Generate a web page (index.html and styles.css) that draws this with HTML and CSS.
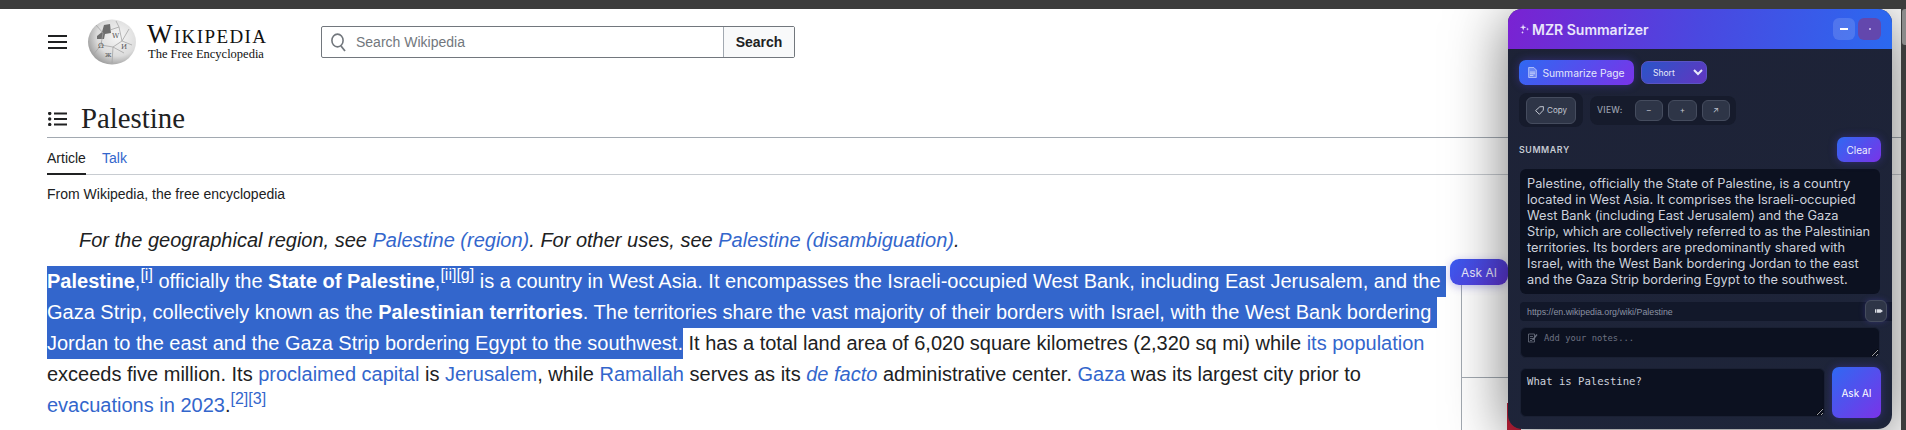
FILE: index.html
```html
<!DOCTYPE html>
<html lang="en">
<head>
<meta charset="utf-8">
<title>Palestine - Wikipedia</title>
<link rel="stylesheet" href="styles.css">
</head>
<body>
<div class="chrome-bar"></div>
<div class="viewport">
  <header class="wiki-header">
    <svg class="hamburger" viewBox="0 0 19 14"><path d="M0 1h19M0 7h19M0 13h19" stroke="#202122" stroke-width="2"/></svg>
    <svg class="globe" viewBox="0 0 48 46">
      <defs>
        <radialGradient id="gl" cx="0.62" cy="0.38" r="0.72">
          <stop offset="0" stop-color="#f6f6f6"/>
          <stop offset="0.6" stop-color="#dcdcdc"/>
          <stop offset="1" stop-color="#8f8f8f"/>
        </radialGradient>
      </defs>
      <ellipse cx="24" cy="23" rx="24" ry="22.5" fill="url(#gl)"/>
      <path d="M9 17l5-4 2-7 6-1 1 9-6 1-1 5H9z" fill="#6e6e6e"/>
      <path d="M8 6l7 8M15 14l-2 12M13 26l12 2M25 28l9-6M34 22L31 8M31 8l-9 3M34 22l10 4M25 28l-1 16M13 26L5 36M36 34l-11-6M28 2l3 6M41 10l-7 12" stroke="#a4a4a4" stroke-width="0.8" fill="none"/>
      <text class="globe-glyph" x="10" y="29">Ω</text>
      <text class="globe-glyph" x="24" y="19">W</text>
      <text class="globe-glyph" x="33" y="30">И</text>
      <text class="globe-glyph" x="17" y="38">ж</text>
    </svg>
    <div class="wordmark">
      <div class="wordmark-name">Wikipedia</div>
      <div class="wordmark-sub">The Free Encyclopedia</div>
    </div>
    <form class="search">
      <div class="search-field">
        <svg class="search-icon" viewBox="0 0 15 19"><ellipse cx="6.5" cy="7.5" rx="5.6" ry="6.4" fill="none" stroke="#72777d" stroke-width="1.6"/><path d="M10 13l4 5" stroke="#72777d" stroke-width="1.8"/></svg>
        <span class="search-placeholder">Search Wikipedia</span>
      </div>
      <div class="search-btn">Search</div>
    </form>
  </header>

  <main class="main">
    <h1 class="page-title">
      <svg class="toc-icon" viewBox="0 0 19 14"><path d="M6 1.5h13M6 7h13M6 12.5h13" stroke="#202122" stroke-width="2"/><circle cx="1.7" cy="1.5" r="1.7" fill="#202122"/><circle cx="1.7" cy="7" r="1.7" fill="#202122"/><circle cx="1.7" cy="12.5" r="1.7" fill="#202122"/></svg>
      <span>Palestine</span>
    </h1>
    <nav class="tabs">
      <span class="tab tab-active">Article</span>
      <a class="tab" href="#">Talk</a>
    </nav>
    <div class="tagline">From Wikipedia, the free encyclopedia</div>
    <div class="hatnote">For the geographical region, see <a href="#">Palestine (region)</a>. For other uses, see <a href="#">Palestine (disambiguation)</a>.</div>
    <div class="article-row">
      <p class="lead"><span id="selected"><b>Palestine</b>,<sup><a class="ref-first" href="#">[i]</a></sup> officially the <b>State of Palestine</b>,<sup><a href="#">[ii]</a><a href="#">[g]</a></sup> is a country in West Asia. It encompasses the Israeli-occupied West Bank, including East Jerusalem, and the Gaza Strip, collectively known as the <b>Palestinian territories</b>. The territories share the vast majority of their borders with Israel, with the West Bank bordering Jordan to the east and the Gaza Strip bordering Egypt to the southwest.</span> It has a total land area of 6,020 square kilometres (2,320 sq mi) while <a href="#">its population</a> exceeds five million. Its <a href="#">proclaimed capital</a> is <a href="#">Jerusalem</a>, while <a href="#">Ramallah</a> serves as its <a href="#"><i>de facto</i></a> administrative center. <a href="#">Gaza</a> was its largest city prior to <a href="#">evacuations in 2023</a>.<sup><a href="#">[2]</a><a href="#">[3]</a></sup></p>
      <aside class="infobox">
        <div class="infobox-cell"></div>
        <div class="infobox-flag"></div>
      </aside>
    </div>
  </main>

  <button class="ask-float">Ask AI</button>

  <section class="panel">
    <div class="panel-head">
      <div class="panel-title">
        <svg class="spark" viewBox="0 0 10 10"><path d="M3.5 0l.8 2.4L7 3.2l-2.4.9-.9 2.5-.9-2.5L.4 3.2l2.5-.8zM8 3.6l.4 1.1 1.2.4-1.2.4L8 6.7l-.4-1.2-1.1-.4 1.1-.4zM3 7l.4 1 1 .4-1 .4-.4 1.1-.4-1.1-1-.4 1-.4z" fill="#e6e0fb"/></svg>
        <span>MZR Summarizer</span>
      </div>
      <div class="panel-win">
        <button class="win-btn win-min"><i></i></button>
        <button class="win-btn win-close"><i></i></button>
      </div>
    </div>

    <div class="panel-row row-summarize">
      <button class="btn-grad btn-summarize">
        <svg class="doc" viewBox="0 0 10 13"><path d="M.5.5h6l3 3v9h-9z" fill="#c9d4fb" fill-opacity=".35" stroke="#dfe5fd" stroke-width=".8"/><path d="M2 6h6M2 8h6M2 10h4" stroke="#eef1fe" stroke-width=".8"/></svg>
        <span>Summarize Page</span>
      </button>
      <select class="length"><option>Short</option></select>
    </div>

    <div class="panel-row row-tools">
      <div class="tool-copy">
        <button class="btn-dark btn-copy">
          <svg class="tag" viewBox="0 0 9 9"><path d="M.6 4.6L4.8.8 8.4.6l-.1 3.6-3.9 4.1z" fill="none" stroke="#d3d7e0" stroke-width=".9"/></svg>
          <span>Copy</span>
        </button>
      </div>
      <div class="tool-view">
        <span class="view-label">VIEW:</span>
        <button class="btn-dark btn-view">–</button>
        <button class="btn-dark btn-view">+</button>
        <button class="btn-dark btn-view">↗</button>
      </div>
    </div>

    <div class="panel-row row-summary-head">
      <span class="summary-label">SUMMARY</span>
      <button class="btn-grad btn-clear">Clear</button>
    </div>

    <div class="summary-box">Palestine, officially the State of Palestine, is a country located in West Asia. It comprises the Israeli-occupied West Bank (including East Jerusalem) and the Gaza Strip, which are collectively referred to as the Palestinian territories. Its borders are predominantly shared with Israel, with the West Bank bordering Jordan to the east and the Gaza Strip bordering Egypt to the southwest.</div>

    <div class="url-row">
      <span class="url-text">https://en.wikipedia.org/wiki/Palestine</span>
      <button class="btn-dark btn-edit">
        <svg class="pencil" viewBox="0 0 8 6"><path d="M0 1.2h1v3.6H0zM1.6 1.2h4L8 3 5.6 4.8h-4z" fill="#d9dce3"/></svg>
      </button>
    </div>

    <div class="notes-wrap">
      <textarea class="notes" placeholder="Add your notes..."></textarea>
      <svg class="note-icon" viewBox="0 0 10 10"><path d="M.5 1h6v8h-6zM2 3.5h3M2 5.5h3M2 7.5h2" fill="none" stroke="#6c7282" stroke-width=".8"/><path d="M4.5 6l4-5 1 1-4 5-1.3.3z" fill="#6c7282"/></svg>
    </div>

    <div class="ask-row">
      <textarea class="question">What is Palestine?</textarea>
      <button class="btn-grad btn-ask">Ask AI</button>
    </div>
  </section>

  <div class="scroll-track"><div class="scroll-thumb"></div></div>
</div>
<script src="script.js"></script>
</body>
</html>
```
FILE: styles.css
```css
* { box-sizing: border-box; }
html, body { margin: 0; padding: 0; height: 430px; overflow: hidden; background: #fff; }
body { font-family: "Liberation Sans", Arial, sans-serif; color: #202122; }
button { font-family: inherit; cursor: pointer; }

.chrome-bar { height: 9px; background: #3c3c3c; }
.viewport { position: relative; height: 421px; overflow: hidden; background: #fff; }

/* Wikipedia header */
.wiki-header { display: flex; align-items: center; height: 66px; padding-left: 48px; }
.hamburger { width: 19px; height: 14px; flex: none; }
.globe { width: 48px; height: 46px; margin-left: 21px; flex: none; }
.globe-glyph { font-family: "DejaVu Serif", serif; font-size: 7px; fill: #555; }
.wordmark { margin-left: 11px; width: 120px; flex: none; font-family: "Liberation Serif", serif; color: #111; white-space: nowrap; }
.wordmark-name { font-size: 27px; line-height: 22px; font-variant: small-caps; letter-spacing: 1.4px; }
.wordmark-sub { font-size: 12.5px; line-height: 15px; margin-top: 2px; margin-left: 1px; }

.search { display: flex; flex: none; width: 474px; height: 32px; margin-left: 54px; border: 1px solid #72777d; border-radius: 2px; }
.search-field { flex: 1; display: flex; align-items: center; padding-left: 9px; gap: 10px; }
.search-icon { width: 15px; height: 19px; }
.search-placeholder { font-size: 14px; color: #72777d; }
.search-btn { width: 71px; display: flex; align-items: center; justify-content: center; border-left: 1px solid #a2a9b1; background: #f8f9fa; font-size: 14px; font-weight: 700; }

/* Article */
.main { padding-left: 47px; }
.page-title { display: flex; align-items: center; height: 63px; margin: 0; padding: 27px 0 2px; border-bottom: 1px solid #a2a9b1; font-family: "Liberation Serif", serif; font-weight: 400; font-size: 28.8px; }
.toc-icon { width: 19px; height: 14px; margin: 0 14px 0 1px; }
.tabs { display: flex; gap: 16px; height: 37px; border-bottom: 1px solid #c8ccd1; font-size: 14px; line-height: 41px; }
.tab { display: block; height: 37px; }
.tab-active { border-bottom: 2px solid #202122; width: 39px; }
a { color: #3366cc; text-decoration: none; }
.tagline { font-size: 14px; line-height: 20px; margin-top: 9px; }
.hatnote { font-size: 20px; font-style: italic; line-height: 31px; margin: 21px 0 0 32px; }
.article-row { display: flex; margin-top: 10px; }
.lead { flex: none; width: 1402px; margin: 0 13px 0 0; font-size: 20px; line-height: 31px; }
.lead sup { font-size: 16px; line-height: 1; vertical-align: super; }
.lead ::selection, .lead::selection { background: #3366cc; color: #fff; }
.ref-first { border-bottom: 1px solid #0645ad; }
.infobox { width: 60px; border-left: 1px solid #a2a9b1; margin-left: -1px; }
.infobox-cell { height: 112px; border-bottom: 1px solid #a2a9b1; }
.infobox-flag { width: 14px; height: 40px; margin: 25px 0 0 45px; background: #c4213a; }

.ask-float { position: absolute; left: 1450px; top: 250px; width: 58px; height: 26px; padding: 0; border: 0; border-radius: 9px; background: linear-gradient(135deg, #3a5cf0, #6234d8); color: #ecebff; font-family: Inter, sans-serif; font-size: 12px; box-shadow: 0 2px 8px rgba(60, 50, 200, .3); z-index: 2; }

/* Summarizer panel */
.panel { position: absolute; left: 1508px; top: 0; width: 384px; height: 420px; border-radius: 14px; overflow: hidden; background: linear-gradient(160deg, #1d2236, #1e253a); color: #dfe3ea; font-family: Inter, sans-serif; box-shadow: 0 8px 60px rgba(0, 0, 0, .55); z-index: 3; }
.panel-head { display: flex; align-items: center; justify-content: space-between; height: 40px; padding: 0 11px; background: linear-gradient(100deg, #7a22d2, #4a48e0 50%, #2b69f0); }
.panel-title { display: flex; align-items: center; gap: 2px; font-size: 14px; font-weight: 600; color: #e9e6fb; }
.spark { width: 11px; height: 10px; }
.panel-win { display: flex; gap: 3px; }
.win-btn { width: 22px; height: 22px; padding: 0; border: 0; border-radius: 6px; display: flex; align-items: center; justify-content: center; }
.win-min { background: rgba(255, 255, 255, .14); }
.win-min i { width: 8px; height: 1.5px; background: #fff; }
.win-close { width: 23px; background: #6347ad; }
.win-close i { width: 2px; height: 2px; background: #b7a6e4; }

.panel-row { display: flex; padding: 0 11px; }
.row-summarize { margin-top: 11px; align-items: center; gap: 7px; }
.btn-grad { border: 0; border-radius: 7px; background: linear-gradient(135deg, #2f69f2, #7a33e8); color: #fff; box-shadow: 0 0 8px rgba(90, 70, 240, .35); }
.btn-summarize { display: flex; align-items: center; justify-content: center; gap: 5px; width: 115px; height: 25px; padding: 0; font-size: 10.3px; color: #e4e8fb; }
.doc { width: 9px; height: 11px; }
.length { width: 66px; height: 23px; padding-left: 7px; border: 1px solid #5a54c4; border-radius: 7px; background: linear-gradient(135deg, #2a55c8, #6236c0); color: #e8eafa; font-family: Inter, sans-serif; font-size: 8.5px; }

.row-tools { margin-top: 8px; align-items: center; gap: 7px; }
.tool-copy { display: flex; align-items: center; width: 64px; height: 34px; padding: 0 7px; border-radius: 8px; background: #161b2c; }
.btn-dark { border: 1px solid #454c5e; border-radius: 6px; background: #2e3547; color: #c5c9d3; padding: 0; }
.btn-copy { display: flex; align-items: center; justify-content: center; gap: 3px; width: 50px; height: 27px; font-size: 8px; }
.tag { width: 9px; height: 9px; }
.tool-view { display: flex; align-items: center; width: 146px; height: 29px; padding: 0 6px 0 7px; gap: 5px; border-radius: 8px; background: #161b2c; }
.view-label { font-size: 8.5px; font-weight: 500; letter-spacing: .3px; color: #9aa0ae; margin-right: 7px; }
.btn-view { width: 28.5px; height: 21px; font-size: 8px; line-height: 1; }

.row-summary-head { margin-top: 10px; align-items: center; justify-content: space-between; }
.summary-label { font-size: 8.8px; font-weight: 600; letter-spacing: .6px; color: #c6cad3; }
.btn-clear { width: 44px; height: 25px; padding: 0; font-size: 10px; color: #eef0fd; }

.summary-box { width: 360px; height: 125px; margin: 7px 0 0 12px; padding: 7px; border-radius: 6px; background: #0c1120; color: #ccd1dc; font-size: 12.8px; line-height: 16px; }

.url-row { position: relative; height: 19px; margin: 8px 0 0 12px; padding-left: 7px; display: flex; align-items: center; border-radius: 4px 0 0 4px; background: #12182a; }
.url-text { font-family: "Liberation Sans", sans-serif; font-size: 8.8px; color: #8b92a3; }
.btn-edit { position: absolute; left: 345px; top: -2px; display: flex; align-items: center; justify-content: center; width: 22px; height: 22px; padding: 0 0 0 6px; box-shadow: 0 0 6px rgba(90, 80, 220, .3); }
.pencil { width: 8px; height: 6px; }

.notes-wrap { position: relative; width: 360px; height: 31px; margin: 6px 0 0 12px; }
.notes, .question { display: block; border: 1px solid #1a2033; border-radius: 6px; background: #0c1120; color: #cdd2dd; font-family: "DejaVu Sans Mono", monospace; outline: none; margin: 0; }
.notes { width: 100%; height: 100%; padding: 4px 7px 0 23px; font-size: 8.8px; line-height: 13px; }
.notes::placeholder { color: #6c7282; opacity: 1; }
.note-icon { position: absolute; left: 8px; top: 6px; width: 10px; height: 10px; }
.ask-row { display: flex; align-items: center; gap: 7px; margin: 9px 0 0 12px; }
.question { width: 305px; height: 49px; padding: 5px 6px; font-size: 10.6px; line-height: 14px; }
.btn-ask { width: 49px; height: 51px; padding: 0; font-size: 10px; }

.scroll-track { position: absolute; left: 1901px; top: 0; width: 5px; height: 421px; background: #3c3c3c; z-index: 4; }
.scroll-thumb { margin: 0 0 0 1px; height: 36px; border-radius: 3px 0 0 3px; background: #8a8a8a; }
```
FILE: script.js
```js
var range = document.createRange();
range.selectNodeContents(document.getElementById("selected"));
window.getSelection().addRange(range);
```
